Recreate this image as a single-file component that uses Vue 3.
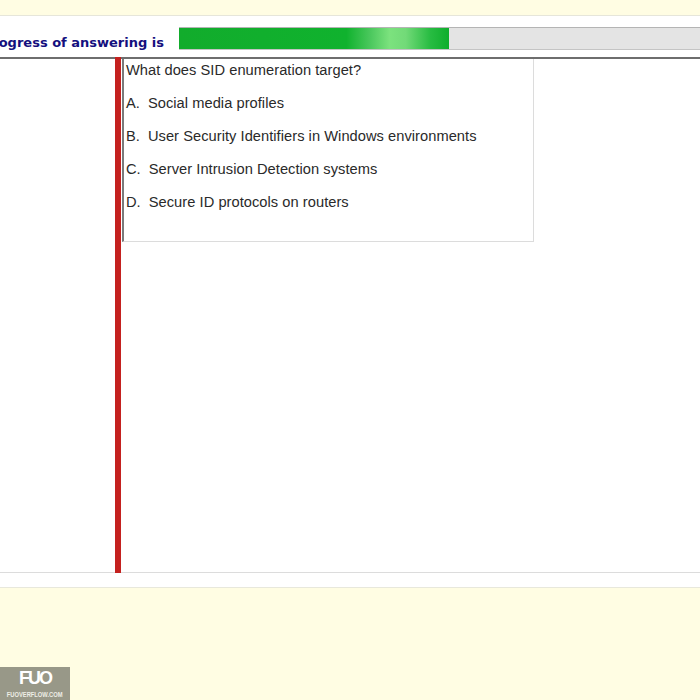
<script setup>
const question = 'What does SID enumeration target?'
const answers = [
  { key: 'A.', text: 'Social media profiles' },
  { key: 'B.', text: 'User Security Identifiers in Windows environments' },
  { key: 'C.', text: 'Server Intrusion Detection systems' },
  { key: 'D.', text: 'Secure ID protocols on routers' },
]
</script>

<template>
  <div class="page">
    <div class="top-band"></div>
    <div class="progress-row">
      <div class="progress-label"><span>Progress of answering is</span></div>
      <div class="progress-track">
        <div class="progress-fill"></div>
      </div>
    </div>
    <div class="main">
      <div class="divider"></div>
      <div class="question">
        <p class="question-text">{{ question }}</p>
        <p v-for="a in answers" :key="a.key" class="answer">
          <span class="answer-key">{{ a.key }}</span>{{ a.text }}
        </p>
      </div>
    </div>
    <div class="foot-gap"></div>
    <div class="bottom-band"></div>
    <div class="logo">
      <span class="logo-mark">FUO</span>
      <span class="logo-site">FUOVERFLOW.COM</span>
    </div>
  </div>
</template>

<style>
body {
  margin: 0;
  background: #fff;
}
</style>

<style scoped>
.page {
  position: relative;
  display: flex;
  flex-direction: column;
  width: 700px;
  height: 700px;
  overflow: hidden;
  background: #fff;
  font-family: "Liberation Sans", Arial, sans-serif;
}

.top-band {
  flex: 0 0 15px;
  background: #fffde3;
  border-bottom: 1px solid #e6e6da;
}

.progress-row {
  flex: 0 0 41px;
  display: flex;
  align-items: flex-start;
  padding-top: 11px;
  box-sizing: border-box;
}

.progress-label {
  flex: 0 0 164px;
  display: flex;
  justify-content: flex-end;
  overflow: hidden;
  height: 30px;
  padding-top: 1px;
  box-sizing: border-box;
  align-items: center;
  white-space: nowrap;
  color: #14107e;
  font-family: "DejaVu Sans", Verdana, sans-serif;
  font-size: 13px;
  font-weight: 700;
}

.progress-track {
  flex: 1 1 auto;
  height: 23px;
  margin-left: 15px;
  box-sizing: border-box;
  background: #e4e4e4;
  border-top: 1px solid #b4b4b4;
  border-bottom: 1px solid #c4c4c4;
}

.progress-fill {
  width: 270px;
  height: 100%;
  background: linear-gradient(
    90deg,
    #12ac2c 0%,
    #10b22e 62%,
    #4cc85e 71%,
    #7ce27e 78%,
    #72da78 84%,
    #28bc42 93%,
    #0eae2c 100%
  );
}

.main {
  flex: 0 0 516px;
  display: flex;
  box-sizing: border-box;
  border-top: 2px solid #6e6e6e;
  border-bottom: 1px solid #dcdcdc;
}

.divider {
  flex: 0 0 6px;
  margin-left: 115px;
  margin-top: -2px;
  margin-bottom: -1px;
  background: #c4211f;
}

.question {
  width: 412px;
  height: 183px;
  margin-left: 1px;
  padding-left: 2px;
  padding-top: 1px;
  box-sizing: border-box;
  border-left: 2px solid #7a7a7a;
  border-right: 1px solid #dcdcdc;
  border-bottom: 1px solid #dcdcdc;
  color: #2a2a2a;
  font-size: 14.67px;
  letter-spacing: 0.04px;
  line-height: 20px;
}

.question-text {
  margin: 0;
  height: 20px;
}

.answer {
  margin: 13px 0 0;
}

.answer-key {
  margin-right: 8px;
}

.foot-gap {
  flex: 0 0 14px;
  border-bottom: 1px solid #e8e8dc;
}

.bottom-band {
  flex: 1 1 auto;
  background: #fffde3;
}

.logo {
  position: absolute;
  left: 0;
  bottom: 0;
  display: flex;
  flex-direction: column;
  align-items: center;
  width: 70px;
  height: 33px;
  background: #989888;
  color: #fff;
}

.logo-mark {
  font-size: 18px;
  font-weight: 700;
  line-height: 23px;
  letter-spacing: -2px;
}

.logo-site {
  font-size: 8px;
  line-height: 9px;
  font-weight: 700;
  white-space: nowrap;
  color: #eeeee6;
  transform: scaleX(0.72);
}
</style>
